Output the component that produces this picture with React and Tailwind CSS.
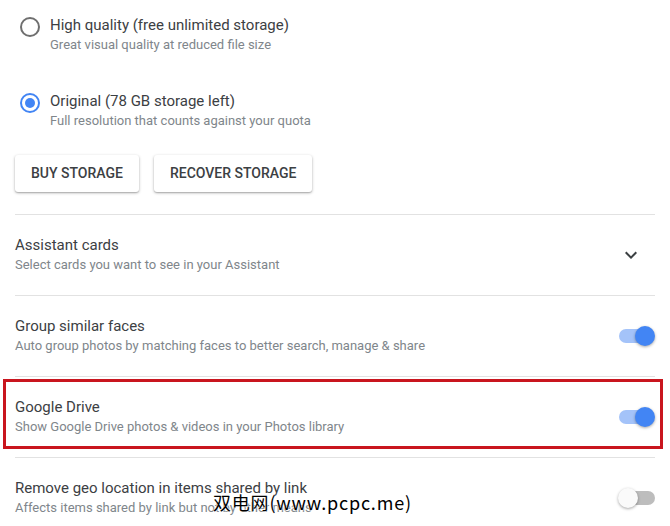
import React from "react";

function Radio({ checked, title, sub }) {
  return (
    <div className="flex items-start">
      <div className="w-[30px] pt-[2px] flex-none">
        {checked ? (
          <div className="w-[20px] h-[20px] rounded-full border-2 border-[#4285f4] flex items-center justify-center">
            <div className="w-[10px] h-[10px] rounded-full bg-[#4285f4]" />
          </div>
        ) : (
          <div className="w-[20px] h-[20px] rounded-full border-2 border-[#6f6f6f]" />
        )}
      </div>
      <div>
        <div className="text-[15px] leading-5 text-[#3c4043]">{title}</div>
        <div className="text-[13px] leading-5 text-[#80868b]">{sub}</div>
      </div>
    </div>
  );
}

function Toggle({ on }) {
  return (
    <div className="relative w-[37px] h-[20px] flex items-center">
      <div className={"w-[34px] h-[14px] rounded-full " + (on ? "bg-[#a4c3f9] ml-[1px]" : "bg-[#bdbdbd] ml-[3px]")} />
      {on ? (
        <div className="absolute right-0 top-0 w-[20px] h-[20px] rounded-full bg-[#4285f4] shadow-[0_1px_3px_rgba(0,0,0,0.35)]" />
      ) : (
        <div className="absolute left-0 top-0 w-[20px] h-[20px] rounded-full bg-[#fafafa] shadow-[0_1px_3px_rgba(0,0,0,0.35)]" />
      )}
    </div>
  );
}

function Row({ title, sub, right, highlight }) {
  return (
    <div className="relative border-t border-[#e2e2e2] pt-[20px] pb-[20px] flex items-center justify-between">
      <div>
        <div className="text-[15px] leading-5 text-[#3c4043]">{title}</div>
        <div className="text-[13px] leading-5 text-[#80868b]">{sub}</div>
      </div>
      <div>{right}</div>
      {highlight && (
        <div className="absolute top-[2px] left-[-12px] right-[-8px] h-[70px] border-[3px] border-[#c9151e] pointer-events-none" />
      )}
    </div>
  );
}

export default function App() {
  return (
    <div
      className="relative w-[670px] h-[526px] overflow-hidden bg-white"
      style={{ fontFamily: "Roboto, 'Noto Sans', sans-serif" }}
    >
      <div className="px-[15px]">
        <div className="pl-[5px] pt-[15px] flex flex-col gap-[36px]">
          <Radio title="High quality (free unlimited storage)" sub="Great visual quality at reduced file size" />
          <Radio checked title="Original (78 GB storage left)" sub="Full resolution that counts against your quota" />
        </div>
        <div className="flex gap-[15px] mt-[24px] mb-[22px]">
          <button className="h-[37px] px-[16px] rounded-[3px] bg-white text-[14px] font-medium text-[#3c4043] shadow-[0_1px_3px_rgba(0,0,0,0.3),0_1px_1px_rgba(0,0,0,0.12)]">
            BUY STORAGE
          </button>
          <button className="h-[37px] px-[16px] rounded-[3px] bg-white text-[14px] font-medium text-[#3c4043] shadow-[0_1px_3px_rgba(0,0,0,0.3),0_1px_1px_rgba(0,0,0,0.12)]">
            RECOVER STORAGE
          </button>
        </div>
        <Row
          title="Assistant cards"
          sub="Select cards you want to see in your Assistant"
          right={
            <svg width="24" height="24" viewBox="0 0 24 24" className="mr-[12px]">
              <path d="M7.41 8.59 12 13.17l4.59-4.58L18 10l-6 6-6-6z" fill="#3c4043" />
            </svg>
          }
        />
        <Row
          title="Group similar faces"
          sub="Auto group photos by matching faces to better search, manage & share"
          right={<Toggle on />}
        />
        <Row
          title="Google Drive"
          sub="Show Google Drive photos & videos in your Photos library"
          right={<Toggle on />}
          highlight
        />
        <Row
          title="Remove geo location in items shared by link"
          sub="Affects items shared by link but not by other means"
          right={<Toggle />}
        />
      </div>
      <div
        className="absolute left-[213px] top-[488px] text-[18px] leading-[28px] tracking-[0.8px] text-black [text-shadow:0_0_2px_#fff,0_0_2px_#fff]"
        style={{ fontFamily: "'Noto Sans CJK SC', 'DejaVu Sans', sans-serif" }}
      >
        双电网(www.pcpc.me)
      </div>
    </div>
  );
}
